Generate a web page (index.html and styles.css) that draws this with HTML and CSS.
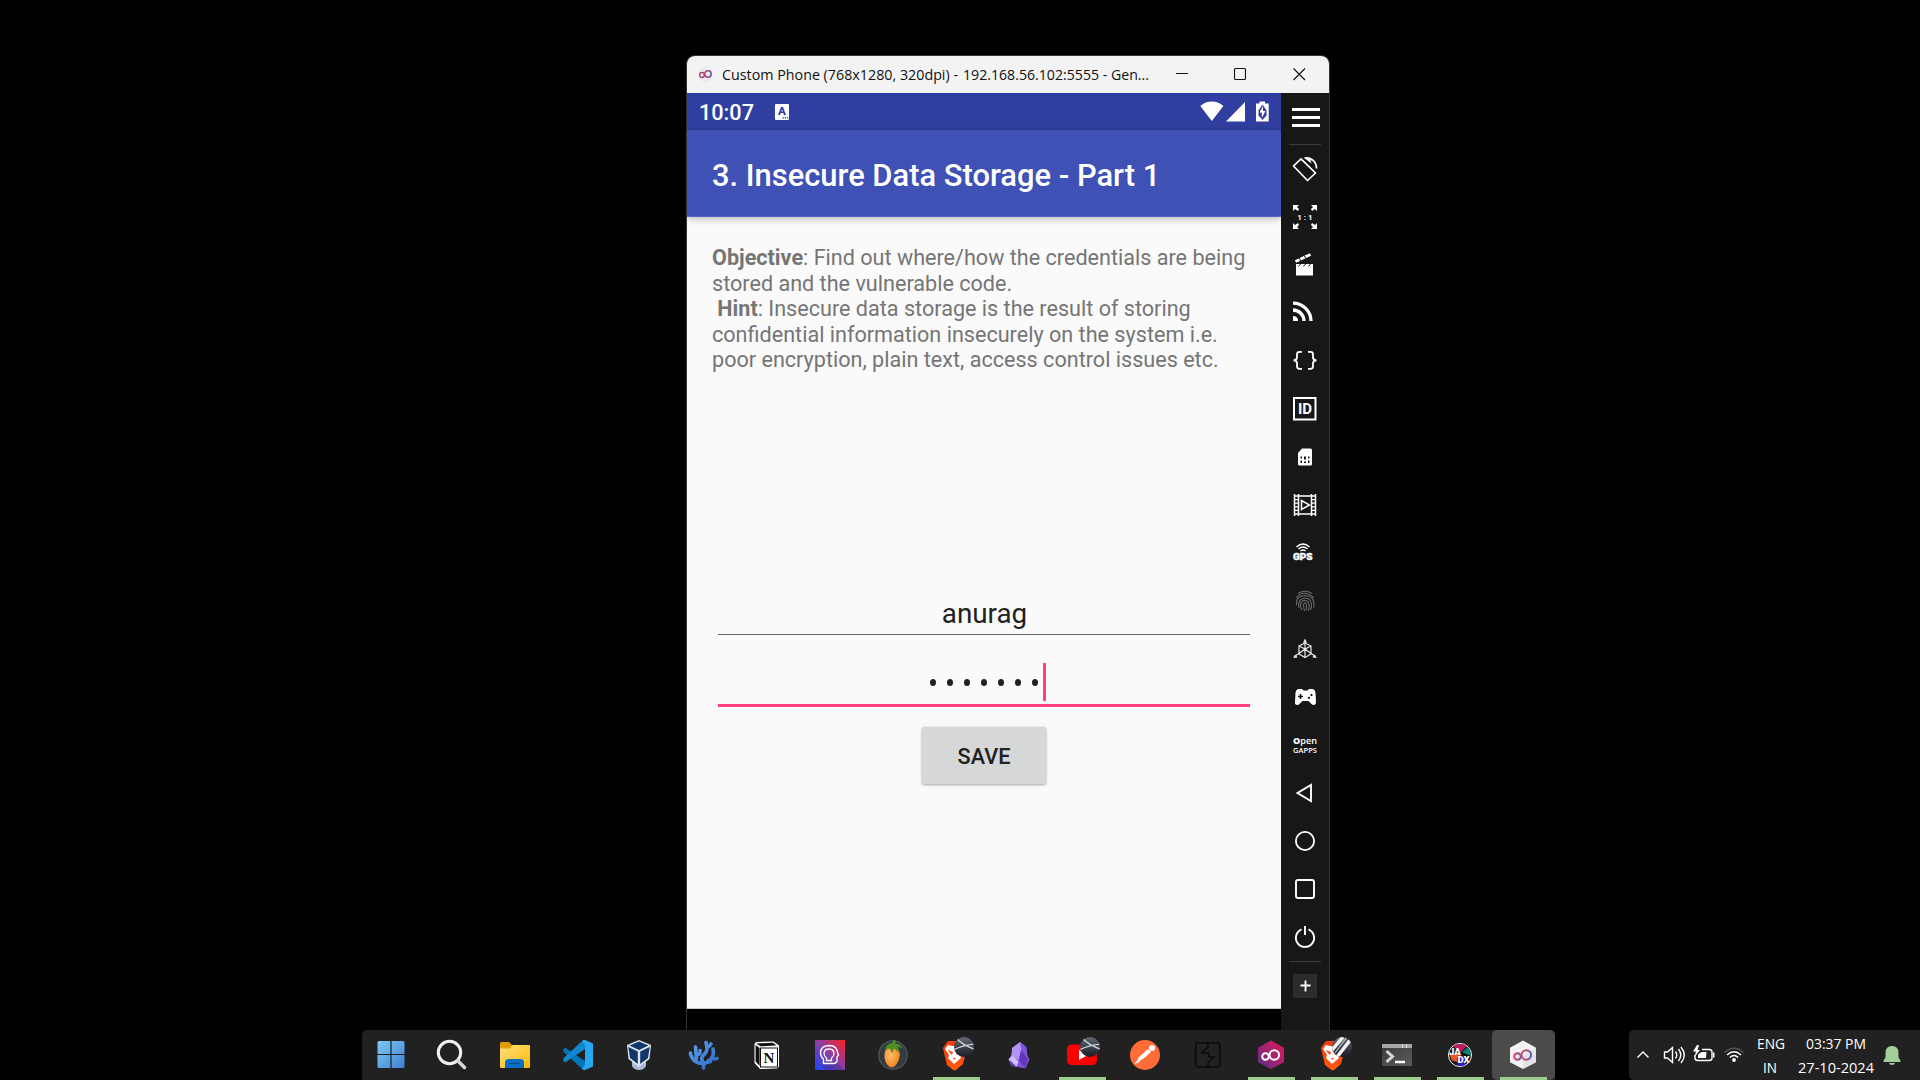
FILE: index.html
```html
<!DOCTYPE html>
<html lang="en">
<head>
<meta charset="utf-8">
<title>Genymotion desktop</title>
<link rel="stylesheet" href="styles.css">
</head>
<body>
<svg class="defs" width="0" height="0" aria-hidden="true">
  <defs>
    <linearGradient id="win" x1="0" y1="0" x2="1" y2="1"><stop offset="0" stop-color="#7ccbf5"/><stop offset="1" stop-color="#3f7fd0"/></linearGradient>
    <linearGradient id="fold" x1="0" y1="0" x2="1" y2="1"><stop offset="0" stop-color="#ffe184"/><stop offset="1" stop-color="#fdb900"/></linearGradient>
    <linearGradient id="coral" x1="0" y1="0" x2="1" y2="1"><stop offset="0" stop-color="#63a2ee"/><stop offset="1" stop-color="#2868c8"/></linearGradient>
    <linearGradient id="face" x1="0" y1="1" x2="1" y2="0"><stop offset="0" stop-color="#1746ff"/><stop offset=".5" stop-color="#8a3fa8"/><stop offset="1" stop-color="#ff2020"/></linearGradient>
    <linearGradient id="brave" x1="0" y1="0" x2="0" y2="1"><stop offset="0" stop-color="#f53b12"/><stop offset="1" stop-color="#ff5a0c"/></linearGradient>
    <linearGradient id="geny" x1="0" y1="1" x2="1" y2="0"><stop offset="0" stop-color="#56308f"/><stop offset=".5" stop-color="#a4236f"/><stop offset="1" stop-color="#e21562"/></linearGradient>
    <linearGradient id="loop" x1="0" y1="0" x2="1" y2="0"><stop offset="0" stop-color="#e93a6c"/><stop offset="1" stop-color="#5a5aa0"/></linearGradient>
    <linearGradient id="term" x1="0" y1="0" x2="1" y2="1"><stop offset="0" stop-color="#3a3a3a"/><stop offset="1" stop-color="#5c5c5c"/></linearGradient>
    <linearGradient id="ball" x1="0" y1="0" x2="0" y2="1"><stop offset="0" stop-color="#646b76"/><stop offset=".5" stop-color="#3b414a"/><stop offset="1" stop-color="#1a1e23"/></linearGradient>
    <radialGradient id="mango" cx=".4" cy=".4" r=".7"><stop offset="0" stop-color="#ffc069"/><stop offset="1" stop-color="#f07a10"/></radialGradient>
    <clipPath id="disc"><circle cx="33" cy="17" r="10"/></clipPath>
    <g id="lion">
      <path fill="url(#brave)" d="M17 11h14l3 4 2 3-1 4-3 12-7 6-2 .5L16 35l-3-12-1-5 2-3z"/>
      <path fill="#fff" d="M17 15l4 1h5l4-1 2 4-3 6 1 3-7 6-6-6 1-3-4-6z"/>
      <path fill="#fb4a14" d="M17 20l5 2-1 3-3-3zM30 20l-5 2 1 3 3-3zM22 28h3l-1.500 2z"/>
    </g>
    <g id="profile">
      <circle cx="33" cy="17" r="10" fill="url(#ball)"/>
      <path clip-path="url(#disc)" stroke="#c9ced3" stroke-width="1.400" fill="none" d="M22 20q10-5 22-6M26 9q6 6 17 10"/>
    </g>
  </defs>
</svg>

<main class="desktop">
  <section class="window">
    <header class="titlebar">
      <svg class="app-icon" width="34" height="37" viewBox="0 0 34 37"><path d="M18.500 10l7 4v9l-7 4-7-4v-9z" fill="#ebebeb"/><g fill="none" stroke="url(#loop)" stroke-width="1.500"><circle cx="15" cy="19" r="2.400"/><circle cx="21" cy="18" r="3.200"/></g></svg>
      <svg class="title-text" width="432" height="37"><text x="1" y="24" textLength="236" lengthAdjust="spacingAndGlyphs">Custom Phone (768x1280, 320dpi) -</text><text x="242" y="24" textLength="186" lengthAdjust="spacingAndGlyphs">192.168.56.102:5555 - Gen...</text></svg>
      <div class="controls">
        <svg width="58" height="37"><path d="M23 17.500h12"/></svg>
        <svg width="58" height="37"><rect x="23.500" y="12.500" width="11" height="11" rx="1"/></svg>
        <svg width="58" height="37"><path d="M24.500 12.500l11.500 11.500M36 12.500l-11.500 11.500"/></svg>
      </div>
    </header>
    <div class="emulator">
      <div class="phone">
        <div class="status">
          <span class="time">10:07</span>
          <svg width="14" height="16" viewBox="0 0 14 16"><rect width="14" height="16" rx="1" fill="#fff"/><path d="M3 11L6 3h2L11 11H9L8.300 9H5.700L5 11zM6.200 7.600h1.600L7 5.300z" fill="#303f9f"/><path d="M7.500 13.200h1.400v1.300H7.500zm2.200 0h1.400v1.300H9.700zm2.200 0h1.300v1.300h-1.300z" fill="#303f9f"/></svg>
          <svg class="signals" width="70" height="37" viewBox="0 0 70 37"><path fill="#fff" d="M.300 13Q5.500 8.600 11.800 8.600T23.400 13L11.800 28zM45 9v19.500H26zM56 10.500h3.500V8.500h5.500v2h3.700v18H56z"/><path fill="#303f9f" d="M62.500 11.500l-4 6v5l4 4.500 4-4.500v-5z"/><path fill="#fff" d="M63 13l-3.500 6.500h2.300V25l3.700-7H63z"/></svg>
        </div>
        <h1 class="appbar">3. Insecure Data Storage - Part 1</h1>
        <div class="content">
          <p class="brief"><b>Objective</b>: Find out where/how the credentials are being<br>stored and the vulnerable code.<br>&nbsp;<b>Hint</b>: Insecure data storage is the result of storing<br>confidential information insecurely on the system i.e.<br>poor encryption, plain text, access control issues etc.</p>
          <div class="field">anurag</div>
          <div class="field secret"><i></i><i></i><i></i><i></i><i></i><i></i><i></i><b class="caret"></b></div>
          <button class="save">SAVE</button>
        </div>
        <div class="navbar"></div>
      </div>
      <aside class="tools">
        <svg class="menu" viewBox="0 0 48 51"><path fill="#fff" d="M11 15h28v3H11zm0 8h28v3H11zm0 8h28v3H11z"/></svg>
        <hr>
        <svg viewBox="0 0 48 48"><g fill="none" stroke="#fff" stroke-width="1.700" stroke-linejoin="round"><path d="M20 13.800L34.500 28 26.500 35.500 12.500 21z"/><path d="M24 12.800C31 12.500 35.500 17 35.500 23.500"/></g><path d="M22.500 12.500h6l2 6z" fill="#fff"/></svg>
        <svg viewBox="0 0 48 48"><path fill="#fff" d="M12 12h6l-2 2 2 2-1 2-3-2-2 2zM36 12h-6l2 2-2 2 1 2 3-2 2 2zM12 36h6l-2-2 2-2-1-2-3 2-2-2zM36 36h-6l2-2-2-2 1-2 3 2 2-2z"/><text x="24" y="27" text-anchor="middle" class="ratio">1 : 1</text></svg>
        <svg viewBox="0 0 48 48"><path fill="#fff" d="M15 23h17v11.500H15z"/><path fill="none" stroke="#fff" stroke-width="3" d="M14.500 20.500L29.500 13.500"/><path fill="none" stroke="#171717" stroke-width="1" d="M18 17l2 3M23 14.500l2 3M17.500 25.500l2-2.500M22.500 25.500l2-2.500M27.500 25.500l2-2.500"/></svg>
        <svg viewBox="0 0 48 48"><g fill="none" stroke="#fff" stroke-width="3.300"><path d="M12 14.200A18 18 0 0 1 30 32M12 21A11 11 0 0 1 23 32"/></g><path fill="#fff" d="M12 27q5 0 5 5h-5z"/></svg>
        <svg viewBox="0 0 48 48"><path fill="none" stroke="#fff" stroke-width="1.800" d="M21 14.800h-2.500q-2.500 0-2.500 2.500v3q0 3-3.500 3 3.500 0 3.500 3v3q0 2.500 2.500 2.500H21M27 14.800h2.500q2.500 0 2.500 2.500v3q0 3 3.500 3-3.500 0-3.500 3v3q0 2.500-2.500 2.500H27"/></svg>
        <svg viewBox="0 0 48 48"><rect x="13" y="13" width="21.500" height="21.500" fill="none" stroke="#fff" stroke-width="2"/><text x="24" y="29.400" text-anchor="middle" class="id">ID</text></svg>
        <svg viewBox="0 0 48 48"><path fill="#fff" d="M21 15.500h8.500q1.500 0 1.500 1.500v14q0 1.500-1.500 1.500h-11q-1.500 0-1.500-1.500V20z"/><path fill="#171717" d="M19.500 23.500h1.500v2h-1.500zm3.500 0h2v3h-2zm4 0h1.500v2H27zm-7.500 4h1.500V30h-1.500zm3.500 1h2V30h-2zm4-1h1.500V30H27z"/></svg>
        <svg viewBox="0 0 48 48"><g fill="none" stroke="#fff"><path stroke-width="1.500" d="M13.500 13v22M17.500 13v22M30.500 13v22M34.500 13v22M17 15h14M17 33h14"/><path stroke-width="1.300" d="M13 15h5M13 18.600h5M13 22.200h5M13 25.800h5M13 29.400h5M13 33h5M30 15h5M30 18.600h5M30 22.200h5M30 25.800h5M30 29.400h5M30 33h5"/><path stroke-width="1.500" d="M20.500 19.500v9l8-4.500z"/></g></svg>
        <svg viewBox="0 0 48 48"><g fill="none" stroke="#fff" stroke-width="1.500"><path d="M15.500 18q6.500-6 13 0M17.500 20q4.500-4 9 0M19.500 22q2.500-2 5 0"/></g><text x="12" y="31" textLength="19.500" lengthAdjust="spacingAndGlyphs" class="gps">GPS</text></svg>
        <svg viewBox="0 0 48 48"><g fill="none" stroke="#6b6b6b" stroke-width="1.100"><path d="M17 16.500q7-4.500 14 0M15 21q8-9.500 18 0M15.500 28q-1-9 8.500-9.500 9 .5 9 9v3M18 31q-2-9 6-10 7 0 6.500 9l-1 3M20.500 33q-3-9 3.500-9.700 5 .5 4 8l-1 2.700M23.500 34q-2-8 .5-8.500 2.500 0 1 8"/></g></svg>
        <svg viewBox="0 0 48 48"><g fill="none" stroke="#e8e8e8" stroke-width="1.200"><path d="M24 18l6 3v8l-6 3.500-6-3.500v-8zM18 21l6 3 6-3M24 24v8.500M24 16v8M18 28.500l-5 3M30 28.500l5 3M18 28.500l6-4.500 6 4.500"/></g><path fill="#e8e8e8" d="M24 13.500l2 4h-4zM12 33l3-3.500 1.500 3zM36 33l-3-3.500-1.500 3z"/></svg>
        <svg viewBox="0 0 48 48"><path fill="#fff" d="M18 16h3l1.500 1.500h4L28 16h3q3 0 3.500 4l.5 9q0 3-2.500 3-1.500 0-3-2l-2-2h-6l-2 2q-1.500 2-3 2-3 0-2.500-3l.5-9q.5-4 3.500-4z"/><path fill="none" stroke="#171717" stroke-width="1.500" d="M17 23.500h5M19.500 21v5"/><circle cx="30.500" cy="22" r="1.100"/><circle cx="28" cy="24.800" r="1.100"/></svg>
        <svg viewBox="0 0 48 48"><text x="12" y="23" textLength="24" lengthAdjust="spacingAndGlyphs" class="open"><tspan class="strong">O</tspan>pen</text><text x="12" y="32" textLength="24" lengthAdjust="spacingAndGlyphs" class="gapps">GAPPS</text></svg>
        <svg viewBox="0 0 48 48"><path fill="none" stroke="#fff" stroke-width="1.900" d="M30 16v16L16.500 24z"/></svg>
        <svg viewBox="0 0 48 48"><circle cx="24" cy="24" r="9.100" fill="none" stroke="#fff" stroke-width="1.800"/></svg>
        <svg viewBox="0 0 48 48"><rect x="15" y="15" width="18" height="18" rx="2" fill="none" stroke="#fff" stroke-width="1.900"/></svg>
        <svg viewBox="0 0 48 48"><path fill="none" stroke="#fff" stroke-width="1.900" d="M20.500 16.400a9.100 9.100 0 1 0 7 0M24 13v9"/></svg>
        <hr>
        <svg viewBox="0 0 48 48"><rect x="12" y="12" width="24" height="24" rx="1" fill="#2c2c2c"/><path fill="none" stroke="#fff" stroke-width="1.800" d="M19.500 23.500h10M24.500 18.500v11"/></svg>
      </aside>
    </div>
  </section>

  <footer class="taskrow">
    <nav class="taskbar">
      <span class="task start"><svg viewBox="0 0 50 50"><rect x="11.500" y="11" width="27" height="27" rx="1.500" fill="url(#win)"/><path stroke="#202020" stroke-width="1.200" d="M25 11v27M11 24.500h28"/></svg></span>
      <span class="task"><svg viewBox="0 0 50 50"><circle cx="22.500" cy="22.500" r="11.200" fill="none" stroke="#f1f1f1" stroke-width="3"/><path stroke="#d6d6dc" stroke-width="3.600" stroke-linecap="round" d="M31 31l6.500 6.500"/></svg></span>
      <span class="task"><svg viewBox="0 0 50 50"><path fill="#e09b00" d="M10 13.500q0-1.500 1.500-1.500H19l3 3h9v5H10z"/><path fill="url(#fold)" d="M10 18.500h10l3-3.500h16q1 0 1 1v20.500q0 1.500-1.500 1.500h-27q-1.500 0-1.500-1.500z"/><path fill="#0b6fc4" d="M15 38v-5.500q0-3.500 3.500-3.500h12q3.500 0 3.500 3.500V38z"/><path stroke="#064b92" stroke-width="1.200" d="M19 33.500h11"/></svg></span>
      <span class="task"><svg viewBox="0 0 50 50"><path fill="#0076b9" d="M12 17.500L10.300 19.500v2L28 38l4-1v-6z"/><path fill="#1187cf" d="M12 32.500L10.300 30.500v-2L28 12l4 1v6z"/><path fill="#27a7f2" d="M31.500 9.700L40 13.500v23L31.500 40.300 28.500 39l3.500-4V15l-3.500-4z"/></svg></span>
      <span class="task"><svg viewBox="0 0 50 50"><path fill="#aeb9d8" d="M16 31h14v5q-2 4-7 4t-7-4z"/><path fill="#dce4ee" d="M23 10l12 5-1.500 14L23 37l-10.500-8L11 15z"/><path fill="#12356a" d="M23 11.500l9.500 4L23 20l-9.500-4.500zM12.300 17l9.500 4.500v12.500L14 28zM33.700 17l-9.500 4.500v12.500L32 28z"/></svg></span>
      <span class="task"><svg viewBox="0 0 50 50"><g fill="none" stroke="url(#coral)" stroke-width="3.600" stroke-linecap="round" stroke-linejoin="round"><path d="M24.500 38v-4.500q-9 .5-12.500-8M11.500 24v-1M17.500 29l-1-12M18 25q4-1 3-4.500M24.500 33q-4-5 1-9 4-3 1.500-11.500M28 18q3-2 4-4M29 31q7-3 5-12M33 27q2 3 5 1.500M24.500 33.500l7-2"/></g></svg></span>
      <span class="task"><svg viewBox="0 0 50 50"><path fill="#fff" d="M14 12l17.500-.5 5.500 4v21l-2 2-17 .5-5.500-6V14z"/><path fill="#111" d="M14 13.500l17-.8 3.500 2.800-16 .8zM13.600 15l4 3v18l-4-4.500z"/><rect x="18.500" y="18" width="17" height="19" fill="#fff" stroke="#111"/><text x="27" y="33" text-anchor="middle" class="notion">N</text></svg></span>
      <span class="task"><svg viewBox="0 0 50 50"><path fill="url(#face)" d="M10 10h30v30H10z"/><path d="M32 33l7 7H20l-4-6z" fill="#1d246c" opacity=".3"/><g fill="none" stroke="#fff"><path stroke-width="1.300" d="M18.500 33.500v-4.500q-3-2-3-6 0-7 8.500-7.500 6.500 0 8 5l1.500 5-1.500 1v4q0 3-4 3z"/><path stroke-width="1.300" d="M21.500 30.500v-2.500q-2.500-1.500-2.500-4.500 0-4.500 5-4.500t5 4.500q0 3-2.500 4.500v2.500z"/></g></svg></span>
      <span class="task"><svg viewBox="0 0 50 50"><circle cx="25" cy="25" r="14.200" fill="#343b3f" stroke="#4b565c" stroke-width="1.200"/><path fill="url(#mango)" d="M19 18q6-3 11 1 3 4 1 10-3 8-7 8.500-6-1-7.500-10-.500-6 2.500-9.500z"/><path fill="#4e8e20" d="M17 20q1-6 7-7l2-3 2 .5-1 3q6 0 7 5l-4-2 1 6-5-4-2 5-2-5z"/></svg></span>
      <span class="task open-app"><svg viewBox="0 0 50 50"><use href="#lion"/><use href="#profile"/></svg></span>
      <span class="task"><svg viewBox="0 0 50 50"><path fill="#8055dd" d="M26.500 12l6 5 1 9 2 3-4 9.500-14-3-3-6 3-5 1-7z"/><path fill="#b294f5" d="M26 12l-8 6-.500 8 7 4 3-10z"/><path fill="#d2c0ff" d="M14.500 29.500l4-4 6 6-2 5.500-5-1.500z"/><path fill="#6236bd" d="M15 29.500l8 7.500-6-1.500zM27 20l7 9-3 9-6-8z"/></svg></span>
      <span class="task open-app"><svg viewBox="0 0 50 50"><rect x="10" y="14.500" width="30" height="20.500" rx="4.500" fill="#f00"/><path fill="#fff" d="M22 20l9 5-9 5z"/><use href="#profile"/></svg></span>
      <span class="task"><svg viewBox="0 0 50 50"><circle cx="25" cy="25" r="15" fill="#ff6c37"/><circle cx="32" cy="18" r="3" fill="#fff"/><path fill="#fff" d="M28 19l3 3-8 7-4 1-1-2z"/><path fill="none" stroke="#fff" stroke-width="1.200" d="M19 29l-4 5M21 29l-4 4"/></svg></span>
      <span class="task"><svg viewBox="0 0 50 50"><rect x="12.800" y="12.800" width="24" height="24" rx="1.500" fill="#222" stroke="#0c0c0c" stroke-width="1.800"/><path fill="none" stroke="#0c0c0c" stroke-width="1.700" d="M25 13v4l-6 6h7v4h5l-6 6v4"/></svg></span>
      <span class="task open-app"><svg viewBox="0 0 50 50"><path fill="url(#geny)" d="M25 10.500l13 7.200v14.600L25 39l-13-6.700V17.700z"/><g fill="none" stroke="#fff" stroke-width="2"><circle cx="19.500" cy="26.500" r="3.300"/><circle cx="28.300" cy="25" r="4.800"/></g></svg></span>
      <span class="task open-app"><svg viewBox="0 0 50 50"><use href="#lion"/><circle cx="33" cy="17" r="10" fill="url(#ball)"/><g clip-path="url(#disc)"><path stroke="#f4f4f4" stroke-width="3.500" d="M23 20l11-13M28 27L42 9"/><path stroke="#bfc5cd" stroke-width="1.200" d="M26 23L38 7"/></g></svg></span>
      <span class="task open-app"><svg viewBox="0 0 50 50"><rect x="10" y="14" width="30" height="22" rx="1" fill="url(#term)"/><path fill="#a6a6a6" d="M10 14h30v4H10z"/><path stroke="#d8d8d8" d="M30.500 14v4M34.500 14v4"/><path fill="none" stroke="#d6d6d6" stroke-width="3" d="M14.500 21l6 5.500-6 5.500"/><path stroke="#fff" stroke-width="2.500" d="M23 32h10"/></svg></span>
      <span class="task open-app"><svg viewBox="0 0 50 50"><circle cx="25" cy="25" r="11.500" fill="#151515" stroke="#fff" stroke-width="1"/><path fill="#c21760" d="M18 16q7-4 14 0l-7 7z"/><path fill="#f05423" d="M14.500 24h12l-5 8-5-2z"/><path fill="#07847c" d="M27 22l6-5q3 5 3 9z"/><path fill="#2c17d6" d="M22 27h8v8q-5 2-8 0z"/><g class="jadx"><text x="14" y="24.500">JA</text><text x="22.500" y="33">DX</text></g></svg></span>
      <span class="task open-app active"><svg viewBox="0 0 50 50"><path fill="#f4f2f3" d="M25 10.500l13 7.200v14.600L25 39l-13-6.700V17.700z"/><path fill="#dddde2" opacity=".7" d="M25 25l13-7v14.300L25 39z"/><g fill="none" stroke="url(#loop)" stroke-width="2"><circle cx="19.500" cy="26.500" r="3.300"/><circle cx="28.300" cy="25" r="4.800"/></g></svg></span>
    </nav>
    <div class="tray">
      <svg width="28" height="50"><path class="line" d="M8.500 27.500L14 22l5.500 5.500"/></svg>
      <svg width="32" height="50"><path class="line" d="M7.500 22h3l5-4.500v15l-5-4.500h-3zM18.500 21.500q2.500 3.500 0 7M21.500 19q4.500 6 0 12M24 17q6.500 8 0 16"/></svg>
      <svg width="32" height="50"><path class="line" d="M13 19.500h7q3 0 3 2.500v6q0 2.500-3 2.500H9q-3 0-3-2.500v-3"/><path fill="#fff" d="M24 22.500h1.500v5H24zM12.500 22h5l-.500 6H9v-3.500zM8 15l-4 6.500h3L5.500 27l5.500-7H8.500L10 15z"/></svg>
      <svg width="30" height="50"><path class="line dim" d="M3.500 22.500q9.500-8.500 19 0"/><path class="line" d="M6 25q7-6.500 14 0M8.800 27.500q4.200-4 8.400 0"/><circle cx="13" cy="30" r="1.900" fill="#fff"/></svg>
      <svg width="40" height="50"><text x="6" y="19" textLength="28" lengthAdjust="spacingAndGlyphs">ENG</text><text x="12" y="43" textLength="14" lengthAdjust="spacingAndGlyphs">IN</text></svg>
      <svg width="88" height="50"><text x="15" y="19" textLength="60" lengthAdjust="spacingAndGlyphs">03:37 PM</text><text x="7" y="43" textLength="76" lengthAdjust="spacingAndGlyphs">27-10-2024</text></svg>
      <svg width="41" height="50"><path fill="#a5cf9a" d="M13 16q6.500 0 6.500 7v4.500l2 3v1.500h-17v-1.500l2-3V23q0-7 6.500-7zM10 33h6q-.500 2-3 2t-3-2z"/></svg>
    </div>
  </footer>
</main>
</body>
</html>
```
FILE: styles.css
```css
* { box-sizing: border-box; }
body { margin: 0; background: #000; }
svg { display: block; flex: none; }
.defs { position: absolute; }

.desktop {
  width: 1920px;
  height: 1080px;
  padding-top: 55px;
  display: flex;
  flex-direction: column;
  overflow: hidden;
  font-family: Roboto, sans-serif;
}

/* emulator window */
.window {
  width: 644px;
  height: 975px;
  margin-left: 686px;
  flex: none;
  display: flex;
  flex-direction: column;
  border: 1px solid #343434;
  border-bottom: 0;
  border-radius: 9px 9px 0 0;
  overflow: hidden;
}
.titlebar { height: 37px; flex: none; display: flex; background: #f3f3f3; }
.title-text { overflow: visible; font: 15px "Open Sans", sans-serif; fill: #111; }
.controls { display: flex; }
.controls svg { fill: none; stroke: #111; stroke-width: 1.100; }
.emulator { flex: 1; display: flex; min-height: 0; }
.phone { width: 594px; display: flex; flex-direction: column; }

.status {
  height: 37px;
  padding: 0 11px 0 12px;
  display: flex;
  align-items: center;
  background: #303f9f;
  color: #fff;
}
.time { width: 76px; padding-top: 1px; font-size: 21.660px; font-weight: 500; line-height: 37px; }
.signals { margin-left: auto; }
.appbar {
  height: 87px;
  margin: 0;
  padding-left: 25px;
  background: #3f51b5;
  border-bottom: 1px solid #5365c4;
  box-shadow: 0 2px 7px rgba(0, 0, 0, .25);
  color: #fff;
  font-size: 30.900px;
  font-weight: 500;
  line-height: 92px;
  white-space: nowrap;
  z-index: 1;
}
.content {
  height: 792px;
  padding: 28px 31px 0;
  display: flex;
  flex-direction: column;
  background: #fafafa;
  border-bottom: 1px solid #c8c8c8;
}
.brief {
  height: 352px;
  margin: 0 -6px;
  font-size: 21.600px;
  line-height: 25.500px;
  color: #757575;
  white-space: nowrap;
}
.field {
  height: 38px;
  padding-left: 1px;
  border-bottom: 1.500px solid #666;
  text-align: center;
  font-size: 27.800px;
  line-height: 33px;
  color: #212121;
}
.secret {
  height: 44px;
  margin-top: 28px;
  padding: 0 0 3px 8px;
  display: flex;
  align-items: center;
  justify-content: center;
  gap: 11px;
  border-bottom: 3px solid #ff4081;
}
.secret i { width: 6px; height: 7px; border-radius: 50%; background: #212121; }
.caret { width: 3px; height: 38px; margin-left: -6px; background: #ff4081; }
.save {
  width: 124px;
  height: 57px;
  margin: 20px auto 0;
  padding: 2px 0 0;
  border: 0;
  border-radius: 3px;
  background: #d6d7d7;
  box-shadow: 0 1px 3px rgba(0, 0, 0, .35);
  color: #212121;
  font: 500 21.660px Roboto, sans-serif;
}
.navbar { flex: 1; background: #000; }

.tools { width: 48px; display: flex; flex-direction: column; background: #171717; }
.tools svg { width: 48px; height: 48px; }
.tools .menu { height: 51px; }
.tools hr { width: 32px; height: 1px; margin: 0 8px; border: 0; background: #3b3b3b; flex: none; }
.tools text { fill: #fff; font-family: Roboto, sans-serif; }
.tools .ratio { font-size: 8px; font-weight: 700; }
.tools .id { font-size: 15px; font-weight: 700; }
.tools .gps { font: 900 9px Roboto, sans-serif; stroke: #fff; stroke-width: .400; }
.tools .open { font-family: "Open Sans", sans-serif; font-size: 9.500px; font-weight: 600; }
.tools .strong { font-weight: 800; }
.tools .gapps { font-family: "Open Sans", sans-serif; font-size: 7.500px; font-weight: 600; }

/* taskbar */
.taskrow { height: 50px; flex: none; padding-left: 362px; display: flex; justify-content: space-between; }
.taskbar { display: flex; background: #212121; border-radius: 5px 5px 0 0; }
.task { width: 63px; height: 50px; padding-right: 1px; display: grid; justify-content: center; }
.task svg { width: 50px; height: 50px; grid-area: 1 / 1; }
.start { width: 59px; }
.open-app::after {
  content: "";
  grid-area: 1 / 1;
  align-self: end;
  justify-self: center;
  width: 47px;
  height: 3px;
  background: #9bcc8c;
}
.active { background: #4b4b4b; border-radius: 5px; }
.notion { font: 700 15px "Liberation Serif", serif; fill: #111; }
.jadx { font: 900 9.500px Roboto, sans-serif; fill: #fff; }

.tray { width: 291px; display: flex; background: #212121; border-radius: 5px 0 0 5px; }
.tray text { fill: #fff; font: 15px "Open Sans", sans-serif; }
.line { fill: none; stroke: #fff; stroke-width: 1.400; }
.dim { stroke: #555; }
```
